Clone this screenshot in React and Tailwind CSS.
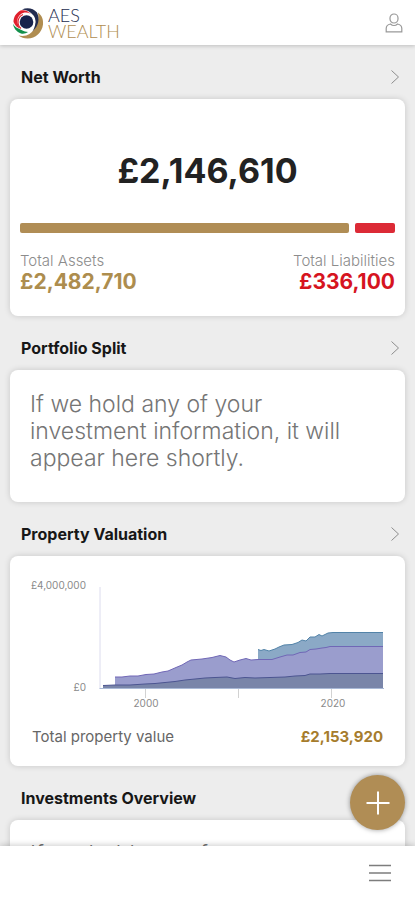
import React from 'react'

const EMPTY_TEXT = 'If we hold any of your investment information, it will appear here shortly.'

const BASE = 108

// value lines of the three stacked properties, in chart units
const flatLine =
  '73,105.5 85,105 100,105 115,104 125,103.5 135,102.5 145,101.5 155,100 165,99 175,98 185,97.5 197,97 205,98.5 215,97.5 225,98 240,97.5 255,97 265,96 275,95.5 280,94 290,94 300,93.5 353,93.5'
const houseLine =
  '85,97 92,97 100,96 108,96 116,94.5 124,94 132,92 138,91 146,87.5 152,85 157,82 161,80 172,79 182,77.5 190,75.5 196,77 200,80 204,82 210,80 216,78.5 221,80 228,79.5 242,79.5 250,77 257,75 263,75 270,72.5 276,72 280,69.5 286,69 292,68 296,67.5 300,66.5 353,66.5'
const villaLine =
  '228,69.5 231,70.5 234,69.5 239,71 245,69 249,67 254,65 262,64.5 268,62.5 272,60 276,61 280,57 285,57 289,54.5 292,56 298,53 303,52.5 353,52.5'

const areas = [
  { line: villaLine, from: 228, fill: '#8ba9c6', stroke: '#5283a8' },
  { line: houseLine, from: 85, fill: '#9a9dcd', stroke: '#7067b6' },
  { line: flatLine, from: 73, fill: '#7985a9', stroke: '#4c5591' },
]

function Logo() {
  return (
    <a href="#" aria-label="AES Wealth" className="flex items-center gap-1">
      <svg viewBox="0 0 32 32" className="size-8" aria-hidden="true">
        <path d="M26 5.500C30 8.500 31.500 12.500 31 17.500C30 25.500 23.500 31.500 15.500 31.500C12 31.500 9 30.500 6.500 28.500C10.500 29.500 14.500 29 17.500 27C23.500 23 27.500 14 26 5.500Z" fill="#b08d50" />
        <path d="M10 2.500C15.500 0 21.500 1.500 25 5.500C28 12 26.500 19 20.500 24.500C24 18.500 24.500 12.500 21.500 8.500C18.500 4.500 14 2.500 10 2.500Z" fill="#232c50" />
        <path d="M8.500 3.500C4 6 1.500 10 1.500 15C3 18.500 5 20.500 8 21.500C4.500 16 4.500 10.500 8.500 7.500C11.500 5 15.500 5 19 7C16 3.500 12.500 2.500 8.500 3.500Z" fill="#e0202d" />
        <path d="M1 16.500C1.500 21 4.500 25 9 26.500C11.500 27 14 26.500 16 25C11.500 24.500 9 22.500 6.500 21.500C4 20.500 2 19 1 16.500Z" fill="#12904b" />
        <circle cx="14.500" cy="15" r="8.800" fill="#fff" />
        <path d="M9 21.500A8.300 8.300 0 0 1 11 7.500" fill="none" stroke="#e0202d" strokeWidth="1.200" />
        <circle cx="14.500" cy="15" r="6.800" fill="#17224c" />
      </svg>
      <span className="flex flex-col font-['Lato'] text-lg leading-4 font-light">
        <span className="text-[#232c50]">AES</span>
        <span className="text-[#b08d50]">WEALTH</span>
      </span>
    </a>
  )
}

function SectionHeader({ title, chevron = true }) {
  return (
    <div className="flex h-[54px] items-center justify-between pt-2.5 pr-4 pl-[21px]">
      <h2 className="text-base leading-5 font-bold text-[#171717]">{title}</h2>
      {chevron && (
        <button type="button" aria-label={`Open ${title}`}>
          <svg viewBox="0 0 8 14" className="h-3.5 w-2" fill="none" stroke="#8c8c8c" aria-hidden="true">
            <path d="M0.500 0.500L7.500 7L0.500 13.500" />
          </svg>
        </button>
      )}
    </div>
  )
}

function Card({ children, className = '' }) {
  return (
    <div className={`mx-2.5 rounded-lg bg-white shadow-[0_0_6px_rgba(0,0,0,0.16)] ${className}`}>
      {children}
    </div>
  )
}

function EmptyCard() {
  return (
    <Card className="pt-[21px] pr-8 pb-[30px] pl-5">
      <p className="text-[23px] leading-[27px] font-light text-[#757575]">{EMPTY_TEXT}</p>
    </Card>
  )
}

function PropertyChart() {
  return (
    <svg viewBox="0 0 355 130" className="w-full" role="img" aria-label="Property value since 1996">
      <g fill="#8a8a8a" fontSize="10">
        <text x="56" y="9" textAnchor="end">£4,000,000</text>
        <text x="56" y="111" textAnchor="end">£0</text>
        <text x="116" y="127" textAnchor="middle">2000</text>
        <text x="303" y="127" textAnchor="middle">2020</text>
      </g>
      {areas.map((a) => (
        <g key={a.fill}>
          <polygon points={`${a.from},${BASE} ${a.line} 353,${BASE}`} fill={a.fill} />
          <polyline points={a.line} fill="none" stroke={a.stroke} />
        </g>
      ))}
      <path d="M70 7V108.500" stroke="#dcdcee" fill="none" />
      <path d="M69.500 108.500H354" stroke="#a9b9d6" fill="none" />
      <path d="M115.500 109V118M208.500 109V118M301.500 109V118" stroke="#d2d2d2" fill="none" />
    </svg>
  )
}

export default function App() {
  return (
    <div className="flex h-dvh flex-col overflow-hidden bg-[#ededed] font-['Inter',sans-serif]">
      <header className="z-10 flex h-[45px] shrink-0 items-center justify-between bg-white px-3 shadow-[0_1px_4px_rgba(0,0,0,0.2)]">
        <Logo />
        <button type="button" aria-label="Account">
          <svg viewBox="0 0 18 20" className="h-5 w-[18px]" fill="none" stroke="#999" strokeWidth="1.200" aria-hidden="true">
            <rect x="5" y="1" width="8" height="9" rx="4" />
            <path d="M5.500 11C3 11.500 1.200 13 1.200 15.500V18.800H16.800V15.500C16.800 13 15 11.500 12.500 11C10.500 13 7.500 13 5.500 11Z" />
          </svg>
        </button>
      </header>

      <main className="min-h-0 flex-1 overflow-y-auto [scrollbar-width:none]">
        <SectionHeader title="Net Worth" />
        <Card className="px-2.5 pt-[52px] pb-[22px]">
          <p className="text-center text-[34px] leading-10 font-bold text-[#222]">£2,146,610</p>
          <div className="mt-8 flex gap-1.5">
            <div className="h-2.5 flex-[328] rounded-[2px] bg-[#b08d55]" />
            <div className="h-2.5 flex-[40] rounded-[2px] bg-[#dc2a36]" />
          </div>
          <dl className="mt-[19px] flex justify-between">
            <div>
              <dt className="text-[15px] leading-[18px] font-light text-[#8c8c8c]">Total Assets</dt>
              <dd className="text-[21px] leading-6 font-bold text-[#ad8d4e]">£2,482,710</dd>
            </div>
            <div className="text-right">
              <dt className="text-[15px] leading-[18px] font-light text-[#8c8c8c]">Total Liabilities</dt>
              <dd className="text-[21px] leading-6 font-bold text-[#d6141f]">£336,100</dd>
            </div>
          </dl>
        </Card>

        <SectionHeader title="Portfolio Split" />
        <EmptyCard />

        <SectionHeader title="Property Valuation" />
        <Card className="px-5 pt-6 pb-[19px]">
          <PropertyChart />
          <div className="mt-[17px] flex items-center justify-between px-0.5 text-[15px] leading-5">
            <span className="text-[#666]">Total property value</span>
            <span className="font-bold text-[#a67c2d]">£2,153,920</span>
          </div>
        </Card>

        <SectionHeader title="Investments Overview" chevron={false} />
        <EmptyCard />
      </main>

      <nav className="relative z-10 flex h-[54px] shrink-0 items-center justify-end bg-white pr-6 shadow-[0_-1px_6px_rgba(0,0,0,0.2)]">
        <button
          type="button"
          aria-label="Add"
          className="absolute right-2.5 bottom-full mb-4 flex size-[55px] items-center justify-center rounded-full bg-[#b08d55] shadow-[0_0_5px_rgba(0,0,0,0.4)]"
        >
          <svg viewBox="0 0 24 24" className="size-6" stroke="#fff" strokeWidth="2" aria-hidden="true">
            <path d="M12 0.500V23.500M0.500 12H23.500" />
          </svg>
        </button>
        <button type="button" aria-label="Menu">
          <svg viewBox="0 0 22 18" className="h-[18px] w-[22px]" stroke="#7d7d7d" strokeWidth="1.500" aria-hidden="true">
            <path d="M0 1.500H22M0 9H22M0 16.500H22" />
          </svg>
        </button>
      </nav>
    </div>
  )
}
